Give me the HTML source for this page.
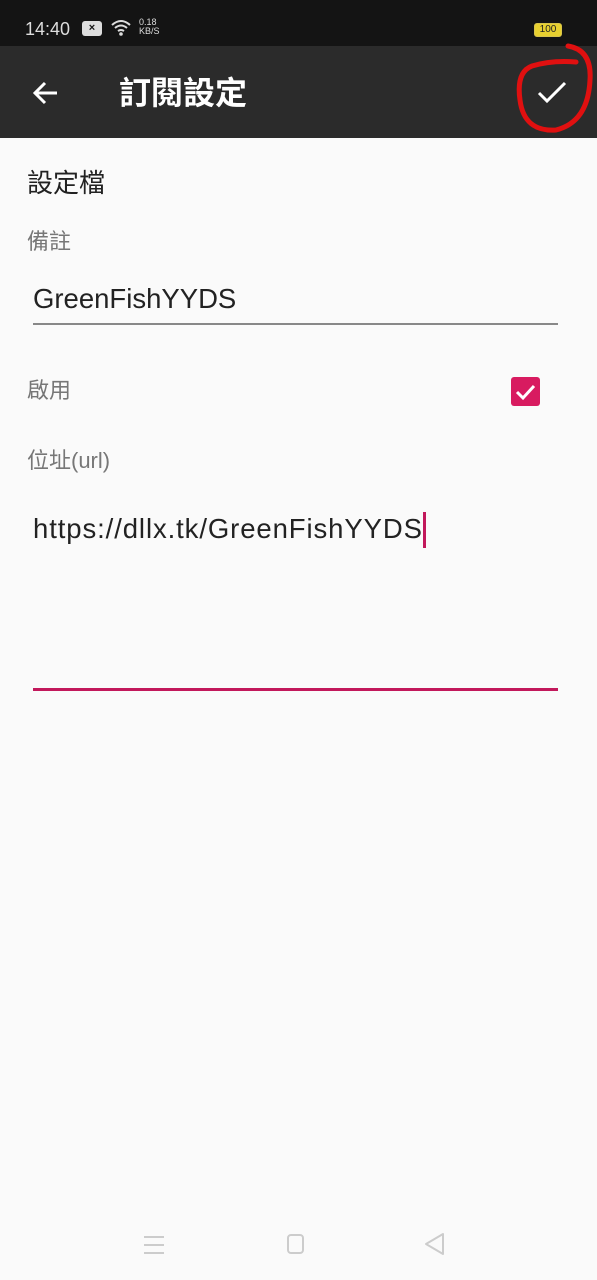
<!DOCTYPE html>
<html><head><meta charset="utf-8"><style>
*{margin:0;padding:0;box-sizing:border-box}
body{width:597px;height:1280px;background:#fafafa;position:relative;overflow:hidden;font-family:"Liberation Sans","Noto Sans CJK TC",sans-serif}
.a{position:absolute;white-space:nowrap;line-height:1.2}
</style></head><body>
<div class="a" style="left:0;top:0;width:597px;height:46px;background:#141414"></div>
<div class="a" style="left:25px;top:19px;font-size:18px;color:#ddd">14:40</div>
<div class="a" style="left:82px;top:21px;width:20px;height:15px;background:#ddd;border-radius:3px;color:#141414;font-size:11px;text-align:center;line-height:15px;font-weight:bold">×</div>
<svg class="a" style="left:110px;top:19px" width="22" height="18" viewBox="0 0 22 18"><path d="M2 6Q11 -2 20 6M5 9Q11 4 17 9M8 12Q11 10 14 12" stroke="#ddd" stroke-width="2" fill="none"/><circle cx="11" cy="15" r="1.8" fill="#ddd"/></svg>
<div class="a" style="left:139px;top:18px;font-size:9px;color:#ddd;line-height:9px">0.18<br>KB/S</div>
<div class="a" style="left:534px;top:23px;width:28px;height:14px;border:1.5px solid #d8c44a;border-radius:3px;background:#e8d030;font-size:10px;line-height:11px;text-align:center;color:#222">100</div>
<div class="a" style="left:0;top:46px;width:597px;height:92px;background:#2b2b2b"></div>
<svg class="a" style="left:32px;top:79px" width="28" height="28" viewBox="0 0 28 28"><path d="M25 14H4M13 4L3 14L13 24" stroke="#fff" stroke-width="3" fill="none"/></svg>
<div class="a" style="left:119px;top:73px;font-size:32px;line-height:40px;color:#fff;font-weight:bold">訂閱設定</div>
<svg class="a" style="left:536px;top:80px" width="32" height="26" viewBox="0 0 32 26"><path d="M3 13L11 21L29 3" stroke="#fff" stroke-width="3" fill="none"/></svg>
<svg class="a" style="left:512px;top:40px" width="85" height="96" viewBox="0 0 85 96"><path d="M56 6Q80 10 78 40Q76 82 44 90Q12 92 8 60Q4 32 20 26Q40 20 64 22" stroke="#e01010" stroke-width="5" fill="none" stroke-linecap="round"/></svg>
<div class="a" style="left:27px;top:167px;font-size:26px;line-height:32px;color:#222">設定檔</div>
<div class="a" style="left:27px;top:228px;font-size:22px;line-height:28px;color:#777">備註</div>
<div class="a" style="left:33px;top:282px;font-size:27.5px;line-height:34px;color:#222">GreenFishYYDS</div>
<div class="a" style="left:33px;top:323px;width:525px;height:2px;background:#888"></div>
<div class="a" style="left:27px;top:377px;font-size:22px;line-height:28px;color:#777">啟用</div>
<div class="a" style="left:511px;top:377px;width:29px;height:29px;background:#d81b60;border-radius:3px"></div>
<svg class="a" style="left:511px;top:377px" width="29" height="29" viewBox="0 0 29 29"><path d="M6 15L12 21L23 9" stroke="#fff" stroke-width="3" fill="none"/></svg>
<div class="a" style="left:27px;top:447px;font-size:22px;line-height:28px;color:#777">位址(url)</div>
<div class="a" style="left:33px;top:512px;font-size:27.5px;line-height:34px;letter-spacing:0.9px;color:#222">https://dllx.tk/GreenFishYYDS</div>
<div class="a" style="left:423px;top:512px;width:3px;height:36px;background:#c2185b"></div>
<div class="a" style="left:33px;top:688px;width:525px;height:3px;background:#c2185b"></div>
<div class="a" style="left:144px;top:1236px;width:20px;height:2px;background:#ccc;box-shadow:0 8px 0 #ccc,0 16px 0 #ccc"></div>
<div class="a" style="left:287px;top:1234px;width:17px;height:20px;border:2px solid #ccc;border-radius:4px"></div>
<svg class="a" style="left:424px;top:1232px" width="22" height="24" viewBox="0 0 22 24"><path d="M19 2V22L2 12Z" stroke="#ccc" stroke-width="2" fill="none" stroke-linejoin="round"/></svg>
</body></html>
